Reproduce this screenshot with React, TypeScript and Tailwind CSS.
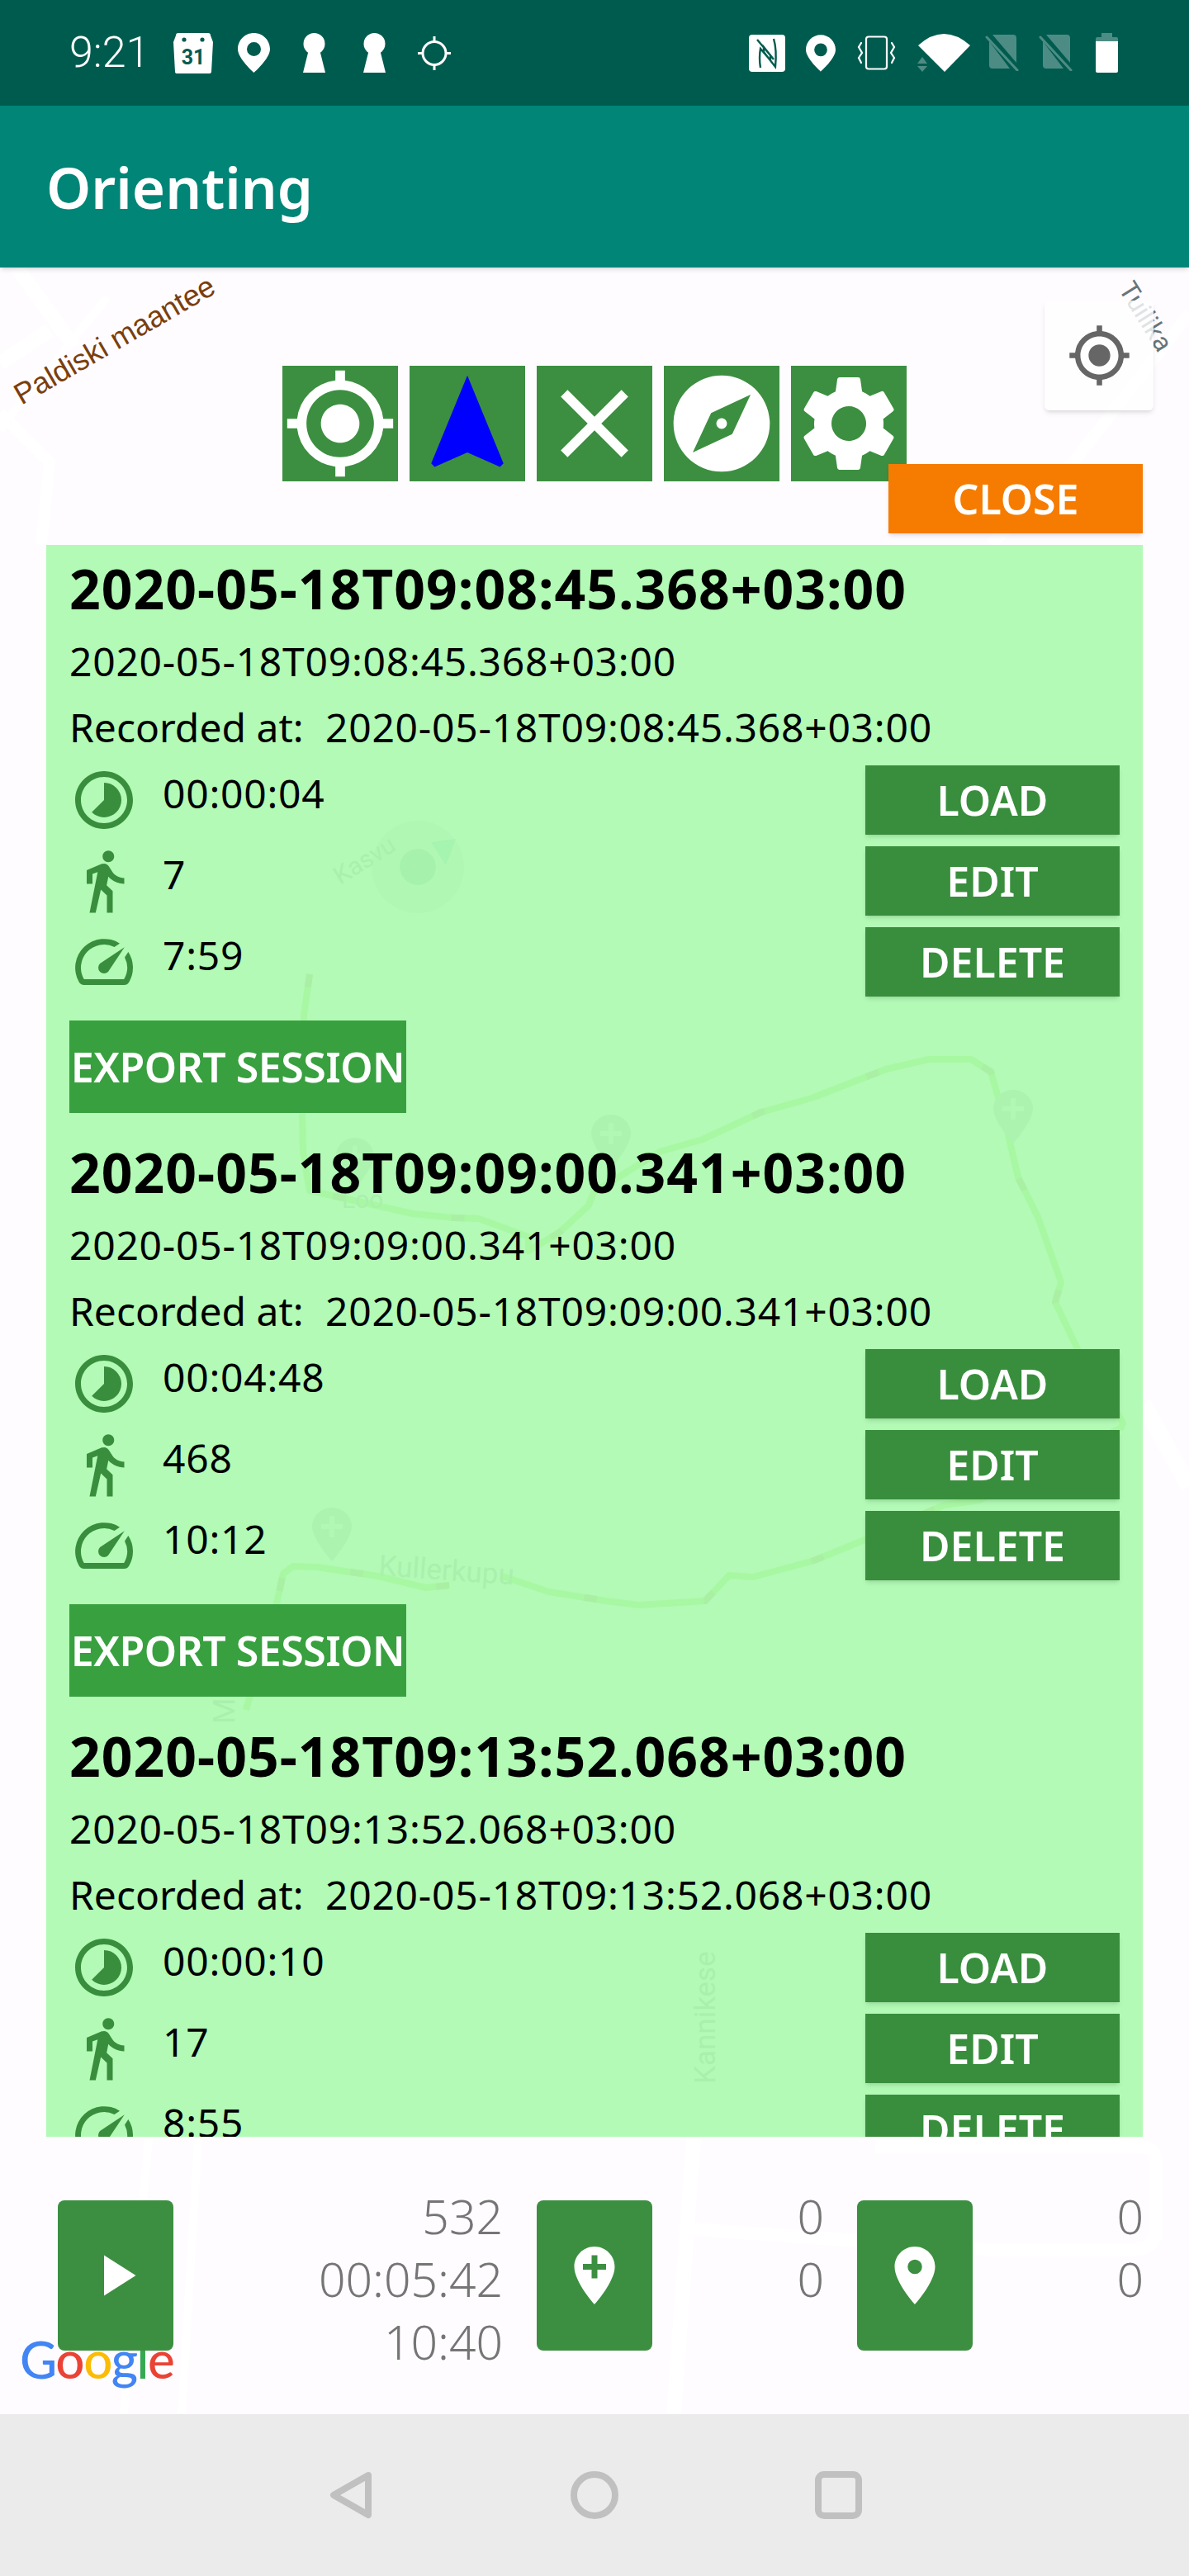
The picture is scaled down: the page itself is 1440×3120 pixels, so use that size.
import React from 'react';
import {
  MdGpsFixed,
  MdNavigation,
  MdClose,
  MdExplore,
  MdSettings,
  MdTimelapse,
  MdDirectionsWalk,
  MdSpeed,
  MdPlayArrow,
  MdAddLocation,
  MdPlace,
} from 'react-icons/md';

const FONT = "font-['Noto_Sans',sans-serif]";

const sessions = [
  { stamp: '2020-05-18T09:08:45.368+03:00', time: '00:00:04', steps: '7', pace: '7:59' },
  { stamp: '2020-05-18T09:09:00.341+03:00', time: '00:04:48', steps: '468', pace: '10:12' },
  { stamp: '2020-05-18T09:13:52.068+03:00', time: '00:00:10', steps: '17', pace: '8:55' },
];

const ROUTE =
  '375,1180 368,1230 366,1350 367,1395 375,1442 500,1470 550,1475 580,1476 640,1498 640,1515 677,1493 713,1460 719,1444 799,1395 851,1380 922,1347 983,1330 1073,1295 1125,1283 1176,1283 1200,1298 1219,1365 1233,1426 1257,1474 1285,1553 1278,1577 1304,1632 1360,1723 1358,1729 1186,1817 1143,1823 1047,1865 986,1890 912,1910 883,1908 854,1939 774,1944 734,1939 665,1928 608,1909';
const ROUTE_2 = '544,1920 516,1923 458,1909 384,1898 355,1897 343,1906 335,1942 298,2071';

const Pin = ({ x, y, s = 1 }: { x: number; y: number; s?: number }) => (
  <g transform={`translate(${x} ${y}) scale(${s})`}>
    <path d="M24 0C11 0 0 10 0 23c0 15 24 42 24 42s24-27 24-42C48 10 37 0 24 0z" fill="#d6ccd6" />
    <path d="M21 10h6v10h10v6H27v10h-6V26H11v-6h10z" fill="#f2ecf2" />
  </g>
);

const MapLayer = () => (
  <svg className="absolute inset-0 w-full h-full" viewBox="0 324 1440 2600">
    {/* roads */}
    <g stroke="#ffffff" fill="none" strokeWidth="18">
      <path d="M20 324 L90 420" />
      <path d="M0 440 L60 400" />
      <path d="M130 360 L0 520" strokeWidth="10" />
      <path d="M50 660 L60 560 L0 500" strokeWidth="14" />
      <path d="M840 2590 L816 2924" />
      <path d="M1060 2600 H1380 Q1400 2600 1400 2620 V2700 Q1400 2725 1370 2725 L1200 2725 L840 2700" strokeWidth="16" />
      <path d="M240 2590 L220 2924 M180 2590 L150 2924" strokeWidth="10" />
      <path d="M1300 560 L1200 660 M1440 380 L1300 560" strokeWidth="14" />
      <path d="M1384 1700 L1440 1800" strokeWidth="20" />
    </g>
    {/* recorded track */}
    <g fill="none" strokeWidth="8" strokeLinejoin="round">
      <polyline points={ROUTE} stroke="#b4ec80" />
      <polyline points={ROUTE_2} stroke="#b4ec80" />
      <polyline points={ROUTE} stroke="#c8b484" strokeDasharray="16 130" />
      <polyline points={ROUTE_2} stroke="#c8b484" strokeDasharray="16 90" />
    </g>
    <Pin x={407} y={1378} s={0.95} />
    <Pin x={716} y={1350} />
    <Pin x={1203} y={1320} />
    <Pin x={378} y={1826} />
    {/* compass shown through the panel */}
    <circle cx="506" cy="1050" r="56" fill="#f0eaf2" />
    <circle cx="506" cy="1050" r="22" fill="#a8c8c8" />
    <polygon points="522,1020 552,1016 540,1048" fill="#a0d0d0" />
    <g fontFamily="'Roboto',sans-serif" fill="#c0b4c0">
      <text x="412" y="1072" fontSize="30" transform="rotate(-32 412 1072)">Kasvu</text>
      <text x="414" y="1463" fontSize="30">Loo</text>
      <text x="458" y="1908" fontSize="35" transform="rotate(4 458 1908)">Kullerkupu</text>
      <text x="866" y="2524" fontSize="35" transform="rotate(-90 866 2524)">Kannikese</text>
      <text x="284" y="2088" fontSize="36" transform="rotate(-90 284 2088)">Mä</text>
    </g>
    <text
      x="26"
      y="491"
      fontFamily="'Liberation Sans',sans-serif"
      fontSize="36"
      fill="#7a3f0c"
      transform="rotate(-30 26 491)"
    >
      Paldiski maantee
    </text>
    <text
      x="1354"
      y="350"
      fontFamily="'Roboto',sans-serif"
      fontSize="32"
      fill="#66757a"
      transform="rotate(58 1354 350)"
    >
      Tuilika
    </text>
    {/* attribution */}
    <text x="24" y="2881" fontFamily="'Lato',sans-serif" fontSize="62" fontWeight="500" letterSpacing="-1.5">
      <tspan fill="#4285f4">G</tspan>
      <tspan fill="#ea4335">o</tspan>
      <tspan fill="#fbbc05">o</tspan>
      <tspan fill="#4285f4">g</tspan>
      <tspan fill="#34a853">l</tspan>
      <tspan fill="#ea4335">e</tspan>
    </text>
  </svg>
);

const StatusBar = () => (
  <div className="h-[128px] bg-[#005b4f] flex items-center justify-between pl-[84px] pr-[86px] shrink-0">
    <div className="flex items-center">
      <span className="w-[93px] text-white text-[52px] leading-none font-light font-['Roboto',sans-serif]">9:21</span>
      <svg className="ml-[33px]" width="48" height="49" viewBox="0 0 48 49">
        <path d="M3 3q0-3 3-3h36q3 0 3 3l3 8-2 36q0 2-3 2H5q-3 0-3-2L0 11z" fill="#fff" />
        <circle cx="13" cy="8" r="2.6" fill="#005b4f" />
        <circle cx="35" cy="8" r="2.6" fill="#005b4f" />
        <text x="24" y="38" textAnchor="middle" fontSize="25" fontWeight="700" fontFamily="'Roboto',sans-serif" fill="#005b4f">
          31
        </text>
      </svg>
      <svg className="ml-[30px]" width="39" height="48" viewBox="0 0 39 48">
        <path
          fillRule="evenodd"
          d="M19.5 0C8.7 0 0 8.7 0 19.5 0 31 19.5 48 19.5 48S39 31 39 19.5C39 8.7 30.3 0 19.5 0zm0 11a8.5 8.5 0 1 1 0 17 8.5 8.5 0 0 1 0-17z"
          fill="#fff"
        />
      </svg>
      <svg className="ml-[40px]" width="27" height="48" viewBox="0 0 27 48">
        <circle cx="13.5" cy="13" r="13" fill="#fff" />
        <polygon points="7,20 20,20 27,48 0,48" fill="#fff" />
      </svg>
      <svg className="ml-[46px]" width="27" height="48" viewBox="0 0 27 48">
        <circle cx="13.5" cy="13" r="13" fill="#fff" />
        <polygon points="7,20 20,20 27,48 0,48" fill="#fff" />
      </svg>
      <svg className="ml-[39px]" width="40" height="41" viewBox="0 0 40 41" fill="none" stroke="#fff" strokeWidth="3">
        <circle cx="20" cy="20.5" r="14" />
        <path d="M20 0v6M20 35v6M0 20.5h6M34 20.5h6" />
      </svg>
    </div>
    <div className="flex items-center">
      <svg width="44" height="45" viewBox="0 0 44 45">
        <rect width="44" height="45" rx="4" fill="#fff" />
        <path d="M10 6 L26 25 V31 L14 17 Q12 28 14 40 M30 5 Q34 18 32 39 L18 21 V15 L30 30" fill="none" stroke="#005b4f" strokeWidth="2.4" />
      </svg>
      <svg className="ml-[25px]" width="36" height="45" viewBox="0 0 39 48">
        <path
          fillRule="evenodd"
          d="M19.5 0C8.7 0 0 8.7 0 19.5 0 31 19.5 48 19.5 48S39 31 39 19.5C39 8.7 30.3 0 19.5 0zm0 11a8.5 8.5 0 1 1 0 17 8.5 8.5 0 0 1 0-17z"
          fill="#fff"
        />
      </svg>
      <svg className="ml-[26px]" width="47" height="42" viewBox="0 0 47 42" fill="none" stroke="#fff" strokeWidth="2.2" strokeLinecap="round">
        <rect x="11" y="1.5" width="25" height="39" rx="3" />
        <path d="M5 9 L2 14 L6 21 L2 27 L5 33 M42 9 L45 14 L41 21 L45 27 L42 33" />
      </svg>
      <svg className="ml-[26px]" width="64" height="46" viewBox="0 0 64 46">
        <path d="M1 14 Q32 -14 64 14 L33 46z" fill="#fff" />
        <path d="M6 28 L0 36 H12z M0 39 H12 L6 46z" fill="#4d8c84" />
      </svg>
      {[0, 1].map((n) => (
        <svg key={n} className={n === 0 ? 'ml-[18px]' : 'ml-[23px]'} width="42" height="44" viewBox="0 0 42 44">
          <path d="M12 0 H34 Q38 0 38 4 V34 L9 0z M5 8 L30 41 H9 Q5 41 5 37z" fill="#4d8c84" />
          <line x1="2" y1="3" x2="39" y2="43" stroke="#4d8c84" strokeWidth="3" strokeLinecap="round" />
        </svg>
      ))}
      <svg className="ml-[27px]" width="27" height="48" viewBox="0 0 27 48">
        <path d="M7 0h13v5h5q2 0 2 2v4H0V7q0-2 2-2h5z" fill="#4d8c84" />
        <path d="M0 10h27v36q0 2-2 2H2q-2 0-2-2z" fill="#fff" />
      </svg>
    </div>
  </div>
);

const ToolButton = ({ children }: { children: React.ReactNode }) => (
  <div className="w-[140px] h-[140px] bg-[#3c8f40] flex items-center justify-center">{children}</div>
);

const ActionButton = ({ label }: { label: string }) => (
  <button className="w-[308px] h-[84px] bg-[#388e3c] text-white text-[50px] leading-none font-semibold shadow-md">
    {label}
  </button>
);

const SessionCard = ({ stamp, time, steps, pace }: (typeof sessions)[number]) => (
  <div className="pb-[29px] shrink-0">
    <div className="h-[84px] leading-[84px] text-[66px] tracking-[1px] font-bold text-black mb-[7px] whitespace-nowrap">
      {stamp}
    </div>
    <div className="h-[80px] leading-[80px] text-[48px] tracking-[0.75px] text-black whitespace-nowrap">{stamp}</div>
    <div className="h-[80px] leading-[80px] text-[48px] text-black whitespace-nowrap flex">
      <span className="w-[310px]">Recorded at:</span>
      <span className="tracking-[0.75px]">{stamp}</span>
    </div>
    <div className="mt-[6px] flex justify-between">
      <div className="flex flex-col gap-[14px]">
        <StatRow icon={<MdTimelapse className="w-[84px] h-[84px]" />} value={time} />
        <StatRow icon={<MdDirectionsWalk className="w-[84px] h-[84px]" />} value={steps} />
        <StatRow icon={<MdSpeed className="w-[84px] h-[84px]" />} value={pace} />
      </div>
      <div className="flex flex-col gap-[14px]">
        <ActionButton label="LOAD" />
        <ActionButton label="EDIT" />
        <ActionButton label="DELETE" />
      </div>
    </div>
    <button className="mt-[29px] w-[408px] h-[112px] bg-[#38a03f] text-white text-[50px] tracking-[-0.5px] leading-none font-semibold whitespace-nowrap flex items-center justify-center">
      EXPORT SESSION
    </button>
  </div>
);

const StatRow = ({ icon, value }: { icon: React.ReactNode; value: string }) => (
  <div className="h-[84px] flex items-start text-[#388e3c]">
    {icon}
    <span className="ml-[29px] text-[48px] tracking-[0.75px] leading-[68px] text-black">{value}</span>
  </div>
);

const Readout = ({ lines, className }: { lines: string[]; className: string }) => (
  <div className={`${className} text-right text-[57px] leading-[76px] font-light text-[#757575]`}>
    {lines.map((line) => (
      <div key={line + lines.length}>{line}</div>
    ))}
  </div>
);

const BottomButton = ({ children, className = '' }: { children: React.ReactNode; className?: string }) => (
  <div className={`w-[140px] h-[182px] mt-[19px] rounded-[8px] bg-[#3c8f40] text-white flex items-center justify-center shrink-0 ${className}`}>
    {children}
  </div>
);

export default function App() {
  return (
    <div className={`w-[1440px] h-[3120px] flex flex-col overflow-hidden bg-[#fffcff] ${FONT}`}>
      <StatusBar />
      <div className="h-[196px] bg-[#008577] flex items-center pl-[56px] shrink-0 relative z-20 shadow-md">
        <h1 className="text-white text-[69px] font-semibold leading-none">Orienting</h1>
      </div>

      <div className="relative flex-1 min-h-0 flex flex-col">
        <MapLayer />
        <div className="relative z-10 flex flex-col flex-1 min-h-0">
          <div className="absolute left-[1265px] top-[40px] w-[132px] h-[133px] rounded-[6px] bg-white/80 shadow-md flex items-center justify-center text-[#666666]">
            <MdGpsFixed className="w-[79px] h-[79px]" />
          </div>

          <div className="pt-[119px] pl-[342px] flex gap-[14px]">
            <ToolButton>
              <MdGpsFixed className="w-[140px] h-[140px] text-white" />
            </ToolButton>
            <ToolButton>
              <MdNavigation className="w-[140px] h-[140px] text-[#0000ff]" />
            </ToolButton>
            <ToolButton>
              <MdClose className="w-[140px] h-[140px] text-white" />
            </ToolButton>
            <ToolButton>
              <MdExplore className="w-[140px] h-[140px] text-white" />
            </ToolButton>
            <ToolButton>
              <MdSettings className="w-[140px] h-[140px] text-white" />
            </ToolButton>
          </div>

          <button className="relative ml-[1076px] -mt-[21px] w-[308px] h-[84px] bg-[#f57c00] text-white text-[50px] leading-none font-semibold shadow-md">
            CLOSE
          </button>

          <div className="mt-[14px] ml-[56px] w-[1328px] h-[1928px] overflow-hidden bg-[rgba(165,249,169,0.86)] pt-[10px] px-[28px] flex flex-col shrink-0">
            {sessions.map((s) => (
              <SessionCard key={s.stamp} {...s} />
            ))}
          </div>

          <div className="flex items-start pl-[70px] pt-[58px]">
            <BottomButton>
              <MdPlayArrow className="w-[84px] h-[84px]" />
            </BottomButton>
            <Readout lines={['532', '00:05:42', '10:40']} className="w-[399px] shrink-0" />
            <BottomButton className="ml-[41px]">
              <MdAddLocation className="w-[84px] h-[84px]" />
            </BottomButton>
            <Readout lines={['0', '0']} className="w-[208px] shrink-0" />
            <BottomButton className="ml-[40px]">
              <MdPlace className="w-[84px] h-[84px]" />
            </BottomButton>
            <Readout lines={['0', '0']} className="w-[207px] shrink-0" />
          </div>
        </div>
      </div>

      <div className="h-[196px] bg-[#ebebeb] flex items-center pl-[399px] shrink-0 relative z-20">
        <svg width="52" height="58" viewBox="0 0 52 58" fill="none" stroke="#c0c0c0" strokeWidth="8" strokeLinejoin="round">
          <path d="M47 5 L5 29 L47 53z" />
        </svg>
        <svg className="ml-[240px]" width="58" height="58" viewBox="0 0 58 58" fill="none" stroke="#c0c0c0" strokeWidth="8">
          <circle cx="29" cy="29" r="25" />
        </svg>
        <svg className="ml-[238px]" width="57" height="58" viewBox="0 0 57 58" fill="none" stroke="#c0c0c0" strokeWidth="8">
          <rect x="4" y="4" width="49" height="50" rx="7" />
        </svg>
      </div>
    </div>
  );
}
